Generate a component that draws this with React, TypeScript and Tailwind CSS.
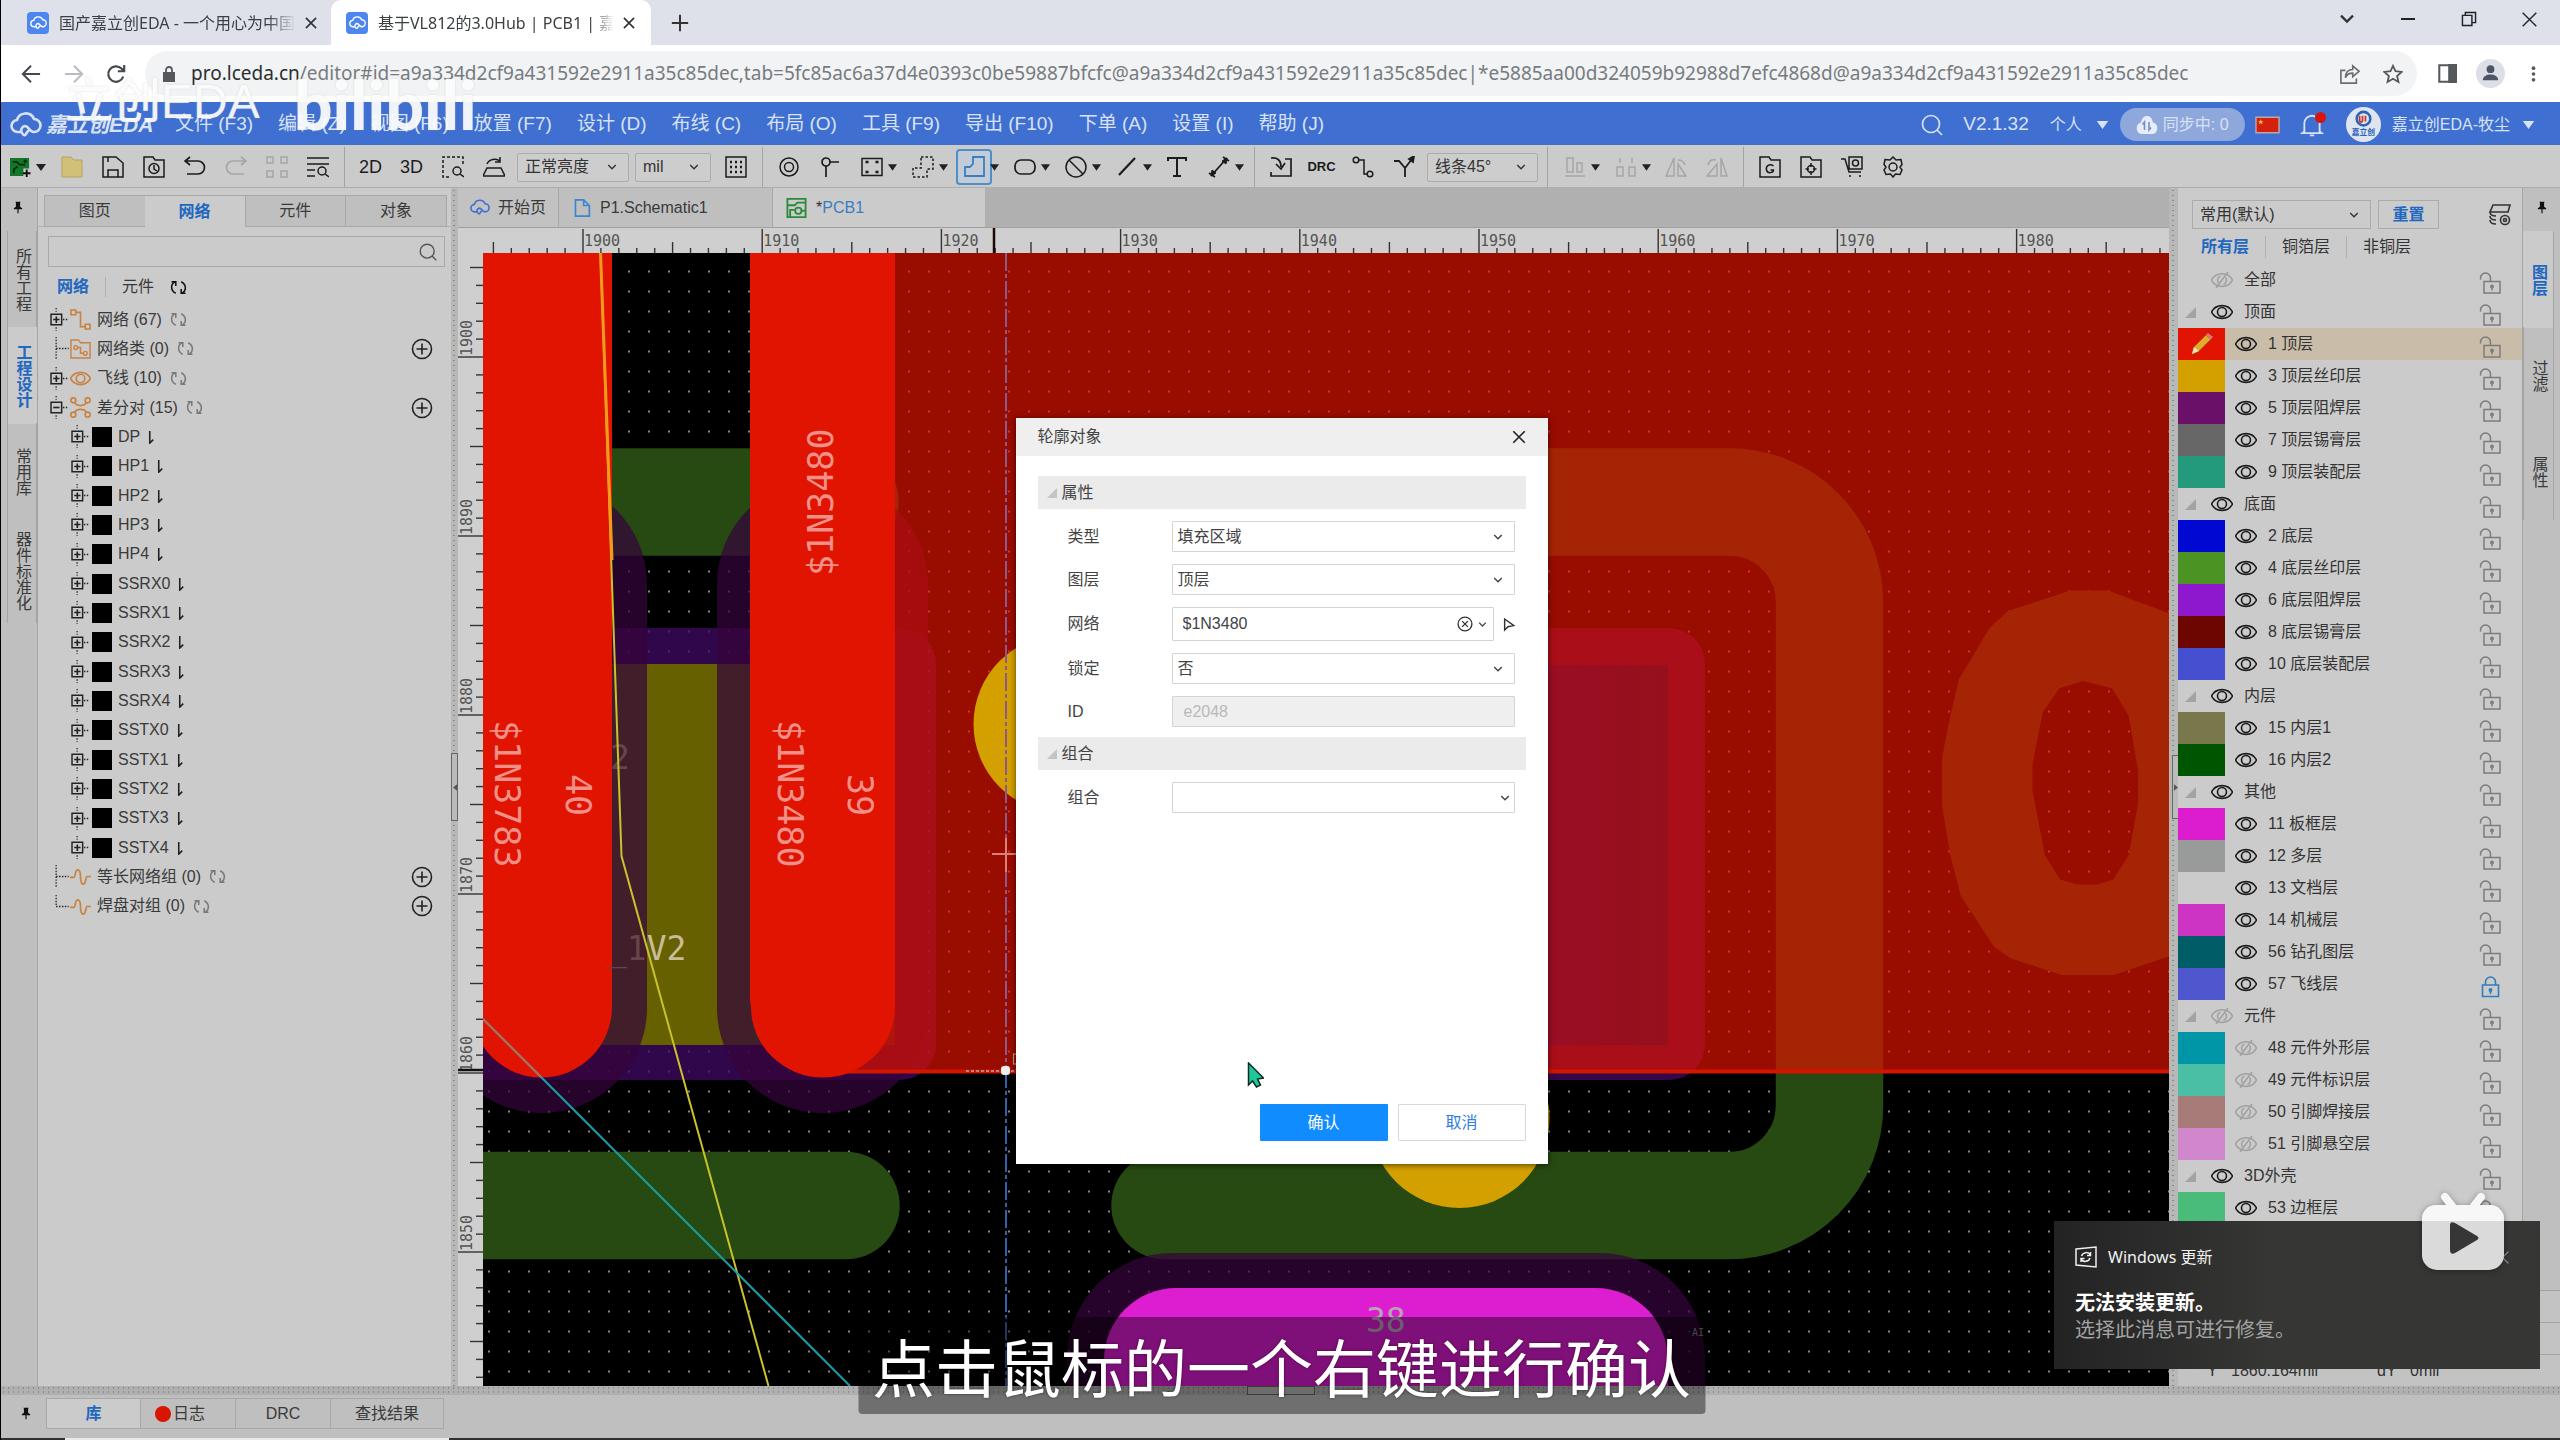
import type { ReactNode } from 'react';

/* ---------- icons ---------- */

type IcProps = { children: ReactNode; className?: string; w?: number };

function Ic({ children, className = 'w-[22px] h-[22px] text-[#1c1c1c]', w = 1.5 }: IcProps) {
  return (
    <svg viewBox="0 0 22 22" className={'shrink-0 ' + className} fill="none" stroke="currentColor" strokeWidth={w} aria-hidden="true">
      {children}
    </svg>
  );
}

function Cloud({ className }: { className: string }) {
  return (
    <svg viewBox="0 0 32 26" className={'shrink-0 ' + className} fill="none" stroke="currentColor" strokeWidth="2.6" strokeLinecap="round" aria-hidden="true">
      <path d="M10 20H8a6 6 0 0 1-1-12 9 9 0 0 1 17-1 6.500 6.500 0 0 1 0 13c-5 0-5-6-9-6a4.500 4.500 0 0 0-3 7c1 2 3 3 4 1l2-3" />
    </svg>
  );
}

function Chevron({ className = 'w-3 h-3 text-[#333]' }: { className?: string }) {
  return (
    <svg viewBox="0 0 12 12" className={'shrink-0 ' + className} fill="none" stroke="currentColor" strokeWidth="1.7" aria-hidden="true">
      <path d="M1.500 3.500 6 8l4.500-4.500" />
    </svg>
  );
}

function Caret({ className = 'w-[10px] h-[7px] text-[#222]' }: { className?: string }) {
  return (
    <svg viewBox="0 0 10 7" className={'shrink-0 ' + className} fill="currentColor" aria-hidden="true">
      <path d="M0 0h10L5 7z" />
    </svg>
  );
}

function Pin() {
  return (
    <svg viewBox="0 0 12 14" className="w-[10px] h-[13px] shrink-0" fill="#111" aria-hidden="true">
      <path d="M3 0h6v1H8.500v5L11 8v1H6.700v5H5.300V9H1V8l2.500-2V1H3z" />
    </svg>
  );
}

function Eye() {
  return (
    <Ic className="w-[22px] h-[22px] text-[#1a1a1a]" w={1.6}>
      <path d="M.5 11C5 2.500 17 2.500 21.500 11 17 19.500 5 19.500 .5 11z" />
      <circle cx="11" cy="11" r="4.500" />
    </Ic>
  );
}

function EyeOff() {
  return (
    <Ic className="w-[22px] h-[22px] text-[#a0a0a0]" w={1.5}>
      <path d="M.5 11C5 2.500 17 2.500 21.500 11 17 19.500 5 19.500 .5 11z" />
      <path d="M7.500 14a4.500 4.500 0 0 1 2-7M14.500 8.500a4.500 4.500 0 0 1-2 7M17 3 5 19" />
    </Ic>
  );
}

function LockOpen() {
  return (
    <svg viewBox="0 0 22 22" className="w-[22px] h-[22px] text-[#7c7c7c]" fill="none" stroke="currentColor" strokeWidth="1.5" aria-hidden="true">
      <path d="M5 9.500h16v11.500H5zM1.500 7.500V6a5 5 0 0 1 10 0v3.500" />
      <path d="M13 16v2.500" />
      <circle cx="13" cy="14.500" r="1.200" fill="currentColor" />
    </svg>
  );
}

function LockClosed() {
  return (
    <svg viewBox="0 0 22 22" className="w-[22px] h-[22px] text-[#2f7dbd]" fill="none" stroke="currentColor" strokeWidth="1.600" aria-hidden="true">
      <path d="M3.500 9h16v11.500h-16zM6.500 9V6a5 5 0 0 1 10 0v3" />
      <path d="M11.500 15v3" />
      <circle cx="11.500" cy="14" r="1.200" fill="currentColor" />
    </svg>
  );
}

function Refresh({ className = 'w-[17px] h-[17px] text-[#7a7a7a]' }: { className?: string }) {
  return (
    <Ic className={className} w={2}>
      <path d="M7.500 18.500C.5 15 .5 7 6.500 3.500M2 3.500h5.500v5.500M14.500 3.500c7 3.500 7 11.500 1 15M20 18.500h-5.500V13" />
    </Ic>
  );
}

function PlusCircle() {
  return (
    <Ic className="w-[22px] h-[22px] text-[#222]" w={1.6}>
      <circle cx="11" cy="11" r="9.500" />
      <path d="M11 5.500v11M5.500 11h11" />
    </Ic>
  );
}

function Glass({ className }: { className: string }) {
  return (
    <Ic className={className} w={1.7}>
      <circle cx="10" cy="10" r="8.500" />
      <path d="m16 16 5 5" />
    </Ic>
  );
}

/* ---------- toolbar ---------- */

function Tool({ label, children }: { label: string; children: ReactNode }) {
  return (
    <button type="button" aria-label={label} className="w-[41px] h-9 flex items-center justify-center shrink-0">
      {children}
    </button>
  );
}

function ToolMenu({ label, children, active }: { label: string; children: ReactNode; active?: boolean }) {
  return (
    <button type="button" aria-label={label} className="w-[51px] h-9 flex items-center pl-1 shrink-0">
      <span className={active ? 'w-9 h-9 flex items-center justify-center border-2 border-[#4c8fc9] rounded-[4px] bg-[#c3ccd6]' : 'w-9 h-9 flex items-center justify-center'}>
        {children}
      </span>
      <Caret className="w-[9px] h-[7px] text-[#222] -ml-[2px]" />
    </button>
  );
}

function Bar() {
  return <span className="w-3 h-full flex justify-center shrink-0"><i className="w-px h-full bg-[#a2a2a2]" /></span>;
}

function ToolSelect({ label, value, className }: { label: string; value: string; className: string }) {
  return (
    <span className={'relative flex items-center h-[29px] shrink-0 ' + className}>
      <select aria-label={label} defaultValue={value} className="appearance-none w-full h-full border border-[#ababab] rounded-[2px] bg-[#cdcdcd] pl-[7px] text-[16px] text-[#333]">
        <option>{value}</option>
      </select>
      <Chevron className="absolute right-3 w-[10px] h-[10px] text-[#333] pointer-events-none" />
    </span>
  );
}

const GREY = 'w-[22px] h-[22px] text-[#a6a6a6]';

function Toolbar() {
  return (
    <div className="h-[43px] pt-[2px] shrink-0 bg-[#cbcbcb] border-b border-[#adadad] flex items-center overflow-hidden">
      <button type="button" aria-label="新建" className="w-[50px] flex items-center pl-[9px] gap-[5px] shrink-0">
        <svg viewBox="0 0 22 22" className="w-[21px] h-[21px]" aria-hidden="true">
          <path d="M0 1h20v11h-6v8H0z" fill="#14762a" />
          <path d="M3 5h4l3 3h6M4 17v-4l4-3" stroke="#062e0c" strokeWidth="1.800" fill="none" />
          <circle cx="16" cy="4.500" r="1.800" fill="#062e0c" />
          <path d="M17.500 13v8M13.500 17h8" stroke="#111" strokeWidth="2" />
        </svg>
        <Caret />
      </button>
      <Tool label="打开"><Ic className="w-[22px] h-[22px] text-[#b5a35c]" w={1}><path d="M1 1h9l3 3h8v17H1z" fill="#cfc178" /></Ic></Tool>
      <Tool label="保存"><Ic><path d="M1 1h13l7 6v14H1zM6 21v-7h10v7M6 1v5" /></Ic></Tool>
      <Tool label="历史"><Ic><path d="M1 1h9l2 3h9v17H1z" /><circle cx="11" cy="12.500" r="5" /><path d="M11 9v4l3 2" /></Ic></Tool>
      <Tool label="撤销"><Ic w={1.7}><path d="M6 1 1 5l5 4M1 5h13a6 6 0 0 1 0 13H3" /></Ic></Tool>
      <Tool label="重做"><Ic className={GREY} w={1.7}><path d="m16 1 5 4-5 4M21 5H8a6 6 0 0 0 0 13h11" /></Ic></Tool>
      <Tool label="网格"><Ic className={GREY}><path d="M1 1h6v6H1zM15 1h6v6h-6zM1 15h6v6H1zM15 15h6v6h-6z" /></Ic></Tool>
      <Tool label="查找"><Ic><path d="M0 2h22M0 8h22M0 14h8M0 20h8" /><circle cx="15" cy="15" r="4" /><path d="m18 18 4 3" /></Ic></Tool>
      <Bar />
      <Tool label="2D"><span className="text-[18px] text-[#1c1c1c]">2D</span></Tool>
      <Tool label="3D"><span className="text-[18px] text-[#1c1c1c]">3D</span></Tool>
      <Tool label="框选缩放"><Ic><path d="M7 21H1V1h20v8" strokeDasharray="3 2" /><circle cx="15" cy="15" r="4" /><path d="m18 18 4 3" /></Ic></Tool>
      <Tool label="翻转"><Ic><path d="M4 12h14l4 8H0zM4 8c2-5 9-6 13-3M17 1v5h-5" /></Ic></Tool>
      <ToolSelect label="亮度" value="正常亮度" className="w-[112px] ml-[3px]" />
      <ToolSelect label="单位" value="mil" className="w-[76px] ml-[6px]" />
      <span className="w-1" />
      <Tool label="栅格"><Ic><path d="M1 1h20v20H1z" /><path d="M5 6h13M5 11h13M5 16h13" strokeDasharray="2 3" strokeWidth="2.400" /></Ic></Tool>
      <Bar />
      <Tool label="过孔"><Ic><circle cx="11" cy="11" r="9" /><circle cx="11" cy="11" r="4.500" /></Ic></Tool>
      <Tool label="测试点"><Ic w={1.7}><circle cx="7" cy="6" r="4" /><path d="M11 6h9M7 10v11" /></Ic></Tool>
      <ToolMenu label="焊盘"><Ic><path d="M1 2.500h20v17H1z" /><path d="M4.500 6h3M14.500 6h3M4.500 16h3M14.500 16h3" strokeWidth="2.500" /></Ic></ToolMenu>
      <ToolMenu label="区域"><Ic><path d="M9 1h12v12h-6v8H1v-9h8z" strokeDasharray="2.500 2" /></Ic></ToolMenu>
      <ToolMenu label="填充" active><Ic className="w-[22px] h-[22px] text-[#3a7fc0]" w={1.8}><path d="M10 1h11v19H2V11h5l3-3z" /></Ic></ToolMenu>
      <ToolMenu label="挖槽"><Ic w={1.7}><rect x="1" y="4" width="20" height="14" rx="6" /></Ic></ToolMenu>
      <ToolMenu label="禁止"><Ic><circle cx="11" cy="11" r="10" /><path d="m4 4 14 14" /></Ic></ToolMenu>
      <ToolMenu label="线"><Ic w={2.2}><path d="M3 19 19 2" /></Ic></ToolMenu>
      <Tool label="文本"><Ic w={2}><path d="M2 5V2h18v3M11 2v18M7 20h8" /></Ic></Tool>
      <ToolMenu label="测量"><Ic w={1.8}><path d="M3 20 19 2M1 17l6 4M15 1l6 4" /><path d="m3 20 1-6 4 3zM19 2l-1 6-4-3z" fill="currentColor" strokeWidth="1" /></Ic></ToolMenu>
      <Bar />
      <Tool label="导入"><Ic w={1.7}><path d="M15 3h6v17H1v-4M1 2c6-1 10 2 10 9M6 8l5 5 4-6" /></Ic></Tool>
      <Tool label="DRC"><span className="text-[13px] font-bold text-[#1c1c1c]">DRC</span></Tool>
      <Tool label="布线"><Ic><circle cx="4" cy="4" r="2.800" /><circle cx="18" cy="18" r="2.800" /><path d="M7 4h5v14h3" /></Ic></Tool>
      <Tool label="差分"><Ic w={1.8}><path d="M1 5h5l6 7v9M12 12l7-9" /><path d="m21 0-1 6-4-3z" fill="currentColor" /></Ic></Tool>
      <ToolSelect label="线条" value="线条45°" className="w-[111px] ml-[3px]" />
      <span className="w-[3px]" />
      <Bar />
      <ToolMenu label="对齐"><Ic className={GREY}><path d="M3 2h6v14H3zM13 7h5v9h-5zM1 20h20" /></Ic></ToolMenu>
      <ToolMenu label="分布"><Ic className={GREY}><path d="M2 11h6v9H2zM14 11h6v9h-6zM5 2v5M17 2v5" /></Ic></ToolMenu>
      <Tool label="镜像"><Ic className={GREY}><path d="M9 2v18H1zM13 8l8 12h-8zM13 4c4 0 6 2 7 5" /></Ic></Tool>
      <Tool label="旋转"><Ic className={GREY}><path d="M15 2v18h6zM11 8v12H1zM2 9c1-4 4-6 8-5" /></Ic></Tool>
      <Bar />
      <Tool label="导出Gerber"><Ic><path d="M1 1h9l2 3h9v17H1z" /><path d="M14.500 10c-4-3-8 0-7 4s7 3 7 0h-3" /></Ic></Tool>
      <Tool label="坐标"><Ic><path d="M1 1h9l2 3h9v17H1z" /><circle cx="11" cy="13" r="3.500" /><path d="M11 7v4M11 15v4M5.500 13h3.500M13 13h3.500" /></Ic></Tool>
      <Tool label="下单"><Ic><path d="M0 3h4l4 13h12M8 1h13v12H8zM8 20h2M18 20h2" /><circle cx="14.500" cy="7" r="3" /></Ic></Tool>
      <Tool label="设置"><Ic><path d="m11 1 3 3 5-.5 1 5-2 2.500 2 3-2 4.500-4.500-.5-2.500 3-2.500-3-4.500.5L2 14l2-3-2-2.500 1-5L8 4z" /><circle cx="11" cy="11" r="4" /></Ic></Tool>
    </div>
  );
}

/* ---------- browser chrome ---------- */

function Favicon() {
  return <span className="w-[22px] h-[22px] rounded-[4px] bg-[#4d86ee] text-white flex items-center justify-center shrink-0"><Cloud className="w-[17px] h-[14px]" /></span>;
}

function BrowserTabs() {
  return (
    <div className="h-[45px] shrink-0 bg-[#dee1ea] flex font-['Noto_Sans','Noto_Sans_CJK_SC',sans-serif] text-[16px] text-[#3c4043]">
      <div className="w-[330px] h-full flex items-center pl-[26px] pr-[13px]">
        <Favicon />
        <span className="ml-[10px] flex-1 overflow-hidden whitespace-nowrap [mask-image:linear-gradient(90deg,#000_88%,transparent)]">国产嘉立创EDA - 一个用心为中国</span>
        <button type="button" aria-label="关闭标签页" className="ml-2"><Ic className="w-[14px] h-[14px] text-[#333]" w={2.6}><path d="m3 3 16 16M19 3 3 19" /></Ic></button>
      </div>
      <div className="w-[320px] h-full flex items-center pl-[15px] pr-[15px] bg-white rounded-t-[10px]">
        <Favicon />
        <span className="ml-[10px] flex-1 overflow-hidden whitespace-nowrap [mask-image:linear-gradient(90deg,#000_90%,transparent)]">基于VL812的3.0Hub | PCB1 | 嘉</span>
        <button type="button" aria-label="关闭标签页" className="ml-2"><Ic className="w-[14px] h-[14px] text-[#333]" w={2.6}><path d="m3 3 16 16M19 3 3 19" /></Ic></button>
      </div>
      <button type="button" aria-label="新标签页" className="w-[58px] h-full flex items-center justify-center"><Ic className="w-[18px] h-[18px] text-[#333]" w={2.4}><path d="M11 1v20M1 11h20" /></Ic></button>
      <span className="flex-1" />
      <div className="flex h-[38px]">
        <button type="button" aria-label="搜索标签页" className="w-[61px] flex items-center justify-center"><Chevron className="w-4 h-4 text-[#333]" /></button>
        <button type="button" aria-label="最小化" className="w-[61px] flex items-center justify-center"><i className="w-[14px] h-[2px] bg-[#222]" /></button>
        <button type="button" aria-label="还原" className="w-[61px] flex items-center justify-center"><Ic className="w-[16px] h-[16px] text-[#222]" w={2}><path d="M2 6h13v14H2zM6 6V2h14v14h-5" /></Ic></button>
        <button type="button" aria-label="关闭" className="w-[61px] flex items-center justify-center"><Ic className="w-[15px] h-[15px] text-[#222]" w={2}><path d="m1 1 20 20M21 1 1 21" /></Ic></button>
      </div>
    </div>
  );
}

const URL_REST =
  '/editor#id=a9a334d2cf9a431592e2911a35c85dec,tab=5fc85ac6a37d4e0393c0be59887bfcfc@a9a334d2cf9a431592e2911a35c85dec|*e5885aa00d324059b92988d7efc4868d@a9a334d2cf9a431592e2911a35c85dec';

function AddressBar() {
  return (
    <div className="h-[57px] shrink-0 bg-white flex items-center">
      <button type="button" aria-label="后退" className="w-[43px] ml-2 flex justify-center"><Ic className="w-[20px] h-[20px] text-[#46494d]" w={2.2}><path d="M21 11H2M11 2l-9 9 9 9" /></Ic></button>
      <button type="button" aria-label="前进" className="w-[43px] flex justify-center"><Ic className="w-[20px] h-[20px] text-[#b9bcc0]" w={2.2}><path d="M1 11h19M11 2l9 9-9 9" /></Ic></button>
      <button type="button" aria-label="刷新" className="w-[41px] flex justify-center"><Ic className="w-[20px] h-[20px] text-[#46494d]" w={2.4}><path d="M19 14a8.500 8.500 0 1 1-2-9l3 3M20 1v7h-7" /></Ic></button>
      <div className="flex-1 min-w-0 h-[45px] ml-[9px] mr-[9px] rounded-full bg-[#f1f3f4] flex items-center pl-[18px] pr-[3px]">
        <svg viewBox="0 0 12 16" className="w-[12px] h-[16px] shrink-0" aria-hidden="true"><path d="M0 6h12v10H0z" fill="#55585c" /><path d="M3 7V4a3 3 0 0 1 6 0v3" fill="none" stroke="#55585c" strokeWidth="1.800" /></svg>
        <a href="#editor" className="ml-[16px] flex-1 min-w-0 overflow-hidden whitespace-nowrap font-['Noto_Sans',sans-serif] text-[19px] text-[#777b80]">
          <span className="text-[#2b2e31]">pro.lceda.cn</span>{URL_REST}
        </a>
        <button type="button" aria-label="分享" className="w-[43px] flex justify-center"><Ic className="w-[20px] h-[20px] text-[#6a6d71]" w={1.8}><path d="M6 7H1v14h17v-5M14 2l7 6-7 6v-4c-5 0-7 2-8 5 0-6 3-9 8-9z" /></Ic></button>
        <button type="button" aria-label="收藏" className="w-[43px] flex justify-center"><Ic className="w-[20px] h-[20px] text-[#55585c]" w={2}><path d="m11 2 2.800 6 6.700.7-5 4.500 1.500 6.600-6-3.500-6 3.500 1.500-6.600-5-4.500L8.200 8z" /></Ic></button>
      </div>
      <button type="button" aria-label="侧边栏" className="w-[43px] flex justify-center"><Ic className="w-[19px] h-[19px] text-[#55585c]" w={2.4}><path d="M1.500 1.500h19v19h-19z" /><path d="M13 1h8v20h-8z" fill="currentColor" /></Ic></button>
      <button type="button" aria-label="用户" className="w-[43px] flex justify-center"><svg viewBox="0 0 30 30" className="w-[29px] h-[29px]" aria-hidden="true"><circle cx="15" cy="15" r="15" fill="#dcdfe5" /><circle cx="15" cy="10.500" r="4" fill="#4d5566" /><path d="M7 22c0-8 16-8 16 0z" fill="#4d5566" /></svg></button>
      <button type="button" aria-label="菜单" className="w-[43px] mr-[5px] flex justify-center"><svg viewBox="0 0 6 20" className="w-[5px] h-[18px]" fill="#55585c" aria-hidden="true"><circle cx="3" cy="3" r="2.200" /><circle cx="3" cy="10" r="2.200" /><circle cx="3" cy="17" r="2.200" /></svg></button>
    </div>
  );
}

/* ---------- application menu ---------- */

const MENUS = ['文件 (F3)', '编辑 (Z)', '视图 (F6)', '放置 (F7)', '设计 (D)', '布线 (C)', '布局 (O)', '工具 (F9)', '导出 (F10)', '下单 (A)', '设置 (I)', '帮助 (J)'];

function MenuBar() {
  return (
    <div className="h-[43px] pt-[2px] shrink-0 bg-[#3f6fd1] flex items-center text-[#d9e2f5] text-[19px] whitespace-nowrap">
      <Cloud className="w-[32px] h-[26px] ml-[9px]" />
      <b className="italic text-[21px] ml-1 w-[129px]">嘉立创EDA</b>
      <nav className="flex gap-[25px]">
        {MENUS.map((m) => <button type="button" key={m}>{m}</button>)}
      </nav>
      <span className="flex-1" />
      <button type="button" aria-label="搜索"><Glass className="w-[22px] h-[22px] text-[#d9e2f5]" /></button>
      <span className="ml-[20px] text-[19px]">V2.1.32</span>
      <button type="button" className="ml-[21px] mr-[11px] flex items-center gap-[14px] text-[16px]">个人<Caret className="w-[13px] h-[8px] text-[#d9e2f5]" /></button>
      <button type="button" className="h-[33px] w-[125px] rounded-full bg-[#8ea8dc] flex items-center pl-[15px] gap-[4px] text-[16px]">
        <svg viewBox="0 0 24 20" className="w-[24px] h-[20px]" aria-hidden="true"><path d="M6 19a6 6 0 0 1 0-11.500C7 2 10 1 12 1s5 1 6 6.500A6 6 0 0 1 18 19z" fill="#e6ecf8" /><path d="M9.500 15V7L7.500 9.500M14 7v8l2-2.500" stroke="#6f8fd0" strokeWidth="1.600" fill="none" /></svg>
        同步中: 0
      </button>
      <svg viewBox="0 0 26 18" className="w-[25px] h-[18px] ml-[10px]" aria-label="语言"><path d="M1 1h24v16H1z" fill="#d4200c" stroke="#b9a7b0" strokeWidth="1.500" /><path d="m6 3 .8 2H9L7.200 6.300l.7 2L6 7.200l-1.900 1.100.7-2L3 5h2.200z" fill="#f0c53a" /></svg>
      <button type="button" aria-label="通知" className="relative ml-[20px]">
        <Ic className="w-[24px] h-[24px] text-[#d9e2f5]" w={1.7}><path d="M4 17V9.500a7 7 0 0 1 14 0V17l2 1.500H2zM9 20.500h4" /></Ic>
        <i className="absolute -right-[2px] -top-[1px] w-[11px] h-[11px] rounded-full bg-[#d8150c]" />
      </button>
      <svg viewBox="0 0 36 36" className="w-[35px] h-[35px] ml-[22px]" aria-hidden="true">
        <circle cx="18" cy="18" r="18" fill="#dfe5ee" />
        <circle cx="18" cy="12" r="7" fill="none" stroke="#2b63b8" strokeWidth="2.600" />
        <path d="M14 9v5c0 2 3 2 3 0V9M20 9v6" stroke="#c5362c" strokeWidth="1.800" fill="none" />
        <text x="18" y="29" textAnchor="middle" fontSize="8" fontWeight="700" fill="#2b63b8">嘉立创</text>
      </svg>
      <button type="button" className="ml-[11px] mr-[25px] flex items-center gap-[12px] text-[16px]">嘉立创EDA-牧尘<Caret className="w-[13px] h-[8px] text-[#d9e2f5]" /></button>
    </div>
  );
}

/* ---------- left side ---------- */

const VTAB = 'border-y border-l border-[#a4a4a4] -mt-px flex items-center justify-center [writing-mode:vertical-rl] leading-4 ';

function LeftStrip() {
  return (
    <div className="w-[37px] shrink-0 bg-[#bfbfbf] flex flex-col pl-[6px] border-r border-[#a4a4a4]">
      <button type="button" aria-label="固定" className="h-[44px] flex items-center pl-[6px] -mt-[3px]"><Pin /></button>
      <button type="button" className={VTAB + 'h-[97px] mt-[2px]'}>所有工程</button>
      <button type="button" className={VTAB + 'h-[97px] bg-[#cbcbcb] text-[#2268c0] font-bold -mr-px'}>工程设计</button>
      <button type="button" className={VTAB + 'h-[97px]'}>常用库</button>
      <button type="button" className={VTAB + 'h-[104px]'}>器件标准化</button>
    </div>
  );
}

function Expander({ open, leaf, last }: { open?: boolean; leaf?: boolean; last?: boolean }) {
  return (
    <svg viewBox="0 0 20 30" className="w-5 h-[29px] shrink-0" fill="none" stroke="#222" strokeWidth="1.300" aria-hidden="true">
      {leaf ? (
        <path d={last ? 'M6 3v12h13' : 'M6 3v23M6 15h13'} strokeDasharray="1.500 1.500" />
      ) : (
        <>
          <path d="M6 3v4M6 23v4M13 15h6" strokeDasharray="1.500 1.500" />
          <path d="M.7 9.500h11v11H.7z" strokeWidth="1.500" />
          <path d={open ? 'M3 15h6.500' : 'M3 15h6.500M6.200 12v6.500'} strokeWidth="1.700" />
        </>
      )}
    </svg>
  );
}

const OR = 'w-[21px] h-[21px] text-[#c98242]';
const TREE_TOP: { name: string; icon: ReactNode; leaf?: boolean; open?: boolean; add?: boolean }[] = [
  { name: '网络 (67)', icon: <Ic className={OR} w={1.7}><path d="M1 1h5v5H1zM16 16h5v5h-5zM6 3.500h5v15h5" /></Ic> },
  { name: '网络类 (0)', leaf: true, add: true, icon: <Ic className={OR} w={1.5}><path d="M1 2h8l2 3h10v16H1z" /><circle cx="6" cy="10" r="2" /><circle cx="16" cy="16" r="2" /><path d="M8 10h3v6h3" /></Ic> },
  { name: '飞线 (10)', icon: <Ic className={OR} w={1.7}><path d="M.5 11C5 2.500 17 2.500 21.500 11 17 19.500 5 19.500 .5 11z" /><circle cx="11" cy="11" r="4.500" /></Ic> },
  { name: '差分对 (15)', open: true, add: true, icon: <Ic className={OR} w={1.7}><circle cx="3.500" cy="3.500" r="2.600" /><circle cx="18.500" cy="3.500" r="2.600" /><circle cx="3.500" cy="18.500" r="2.600" /><circle cx="18.500" cy="18.500" r="2.600" /><path d="M5 6c2 4 10 4 12 0M5 16c2-4 10-4 12 0" /></Ic> },
];
const PAIRS = ['DP', 'HP1', 'HP2', 'HP3', 'HP4', 'SSRX0', 'SSRX1', 'SSRX2', 'SSRX3', 'SSRX4', 'SSTX0', 'SSTX1', 'SSTX2', 'SSTX3', 'SSTX4'];
const Wave = <Ic className={OR} w={1.8}><path d="M0 12h4c2 0 1-8 4-8s3 4 3 7 0 8 3 8 2-8 4-8h4" /></Ic>;
const TREE_END = [{ name: '等长网络组 (0)', last: false }, { name: '焊盘对组 (0)', last: true }];

function LeftPanel() {
  return (
    <div className="w-[413px] shrink-0 bg-[#cbcbcb] flex flex-col text-[16px] text-[#3a3a3a]">
      <div className="mt-[7px] pl-[6px] pr-[5px] flex h-[32px] border-b border-[#b0b0b0]">
        {['图页', '网络', '元件', '对象'].map((t, i) => (
          <button type="button" key={t} className={i === 1 ? 'flex-1 h-[32px] bg-[#cbcbcb] border-t border-[#a8a8a8] text-[#2268c0] font-bold' : 'flex-1 h-[32px] bg-[#bfbfbf] border border-[#a8a8a8] -mr-px'}>{t}</button>
        ))}
      </div>
      <div className="mt-[9px] ml-[10px] mr-[6px] h-[31px] border border-[#a8a8a8] flex items-center pr-[7px]">
        <input type="text" aria-label="搜索" className="flex-1 bg-transparent outline-none px-2" />
        <Glass className="w-[18px] h-[18px] text-[#555]" />
      </div>
      <div className="h-[38px] pt-[2px] flex items-center pl-[19px]">
        <button type="button" className="text-[#2268c0] font-bold">网络</button>
        <i className="w-px h-[20px] bg-[#b0b0b0] mx-4" />
        <button type="button">元件</button>
        <button type="button" aria-label="刷新" className="ml-[16px]"><Refresh className="w-[17px] h-[17px] text-[#111]" /></button>
      </div>
      <ul className="h-[616px] grid auto-rows-fr pl-[12px] pr-[18px]">
        {TREE_TOP.map((n) => (
          <li key={n.name} className="flex items-center min-h-0">
            <Expander open={n.open} leaf={n.leaf} />
            {n.icon}
            <span className="ml-[6px] mr-[8px]">{n.name}</span>
            <Refresh />
            <span className="flex-1" />
            {n.add && <button type="button" aria-label="新增"><PlusCircle /></button>}
          </li>
        ))}
        {PAIRS.map((p) => (
          <li key={p} className="flex items-center pl-[21px] min-h-0">
            <Expander />
            <i className="w-[20px] h-[20px] bg-black ml-[1px]" />
            <span className="ml-[6px]">{p}</span>
            <svg viewBox="0 0 8 16" className="w-[7px] h-[14px] ml-[8px]" fill="none" stroke="#222" strokeWidth="1.800" aria-hidden="true"><path d="M2 1v14l4-4" /></svg>
          </li>
        ))}
        {TREE_END.map((n) => (
          <li key={n.name} className="flex items-center min-h-0">
            <Expander leaf last={n.last} />
            {Wave}
            <span className="ml-[6px] mr-[8px]">{n.name}</span>
            <Refresh />
            <span className="flex-1" />
            <button type="button" aria-label="新增"><PlusCircle /></button>
          </li>
        ))}
      </ul>
    </div>
  );
}

/* ---------- board view ---------- */

const UNIT = 17.92;
const VUNIT = 17.9;

function TopRuler() {
  const ticks = [];
  for (let i = -5; i <= 88; i++) {
    const x = 583 + i * UNIT;
    const major = i % 10 === 0;
    const y = major ? 229 : i % 5 === 0 ? 242 : 248;
    ticks.push(<path key={i} d={`M${x} ${y}V253`} stroke="#333" strokeWidth="1.400" />);
    if (major) ticks.push(<text key={'t' + i} x={x + 1} y="246" fontSize="15" fill="#555">{1900 + i}</text>);
  }
  return (
    <svg viewBox="458 228 1711 25" preserveAspectRatio="xMinYMin slice" className="w-full h-[25px] shrink-0 bg-[#cfcfcf] block font-['DejaVu_Sans_Mono',monospace]" aria-hidden="true">
      {ticks}
      <path d="M994 228v25" stroke="#1d0808" strokeWidth="2.500" />
    </svg>
  );
}

function LeftRuler() {
  const ticks = [];
  for (let i = -5; i <= 57; i++) {
    const y = 357 + i * VUNIT;
    const major = i % 10 === 0;
    const x = major ? 458 : i % 5 === 0 ? 470 : 476;
    ticks.push(<path key={i} d={`M${x} ${y}H483`} stroke="#333" strokeWidth="1.400" />);
    if (major) ticks.push(<text key={'t' + i} transform={`translate(472 ${y - 1}) rotate(-90)`} fontSize="15" fill="#555">{1900 - i}</text>);
  }
  return (
    <svg viewBox="458 253 25 1133" preserveAspectRatio="xMinYMin slice" className="w-[25px] h-full shrink-0 bg-[#cfcfcf] font-['DejaVu_Sans_Mono',monospace]" aria-hidden="true">
      {ticks}
      <path d="M458 1070h25" stroke="#111" strokeWidth="2.500" />
    </svg>
  );
}

function Board() {
  return (
    <svg viewBox="483 253 1686 1133" preserveAspectRatio="xMinYMin slice" className="flex-1 min-w-0 h-full bg-black font-['DejaVu_Sans_Mono',monospace]" aria-label="PCB 画布">
      <defs>
        <pattern id="dots" x="479" y="261" width="20" height="20" patternUnits="userSpaceOnUse">
          <rect x="9" y="9.500" width="2" height="2" fill="#858585" />
        </pattern>
        <linearGradient id="inner" x1="0" y1="0" x2="1" y2="0">
          <stop offset="0.5" stopColor="#a00c2c" />
          <stop offset="1" stopColor="#95101c" />
        </linearGradient>
      </defs>
      <rect x="483" y="253" width="1686" height="1133" fill="#000" />
      <rect x="483" y="253" width="1686" height="1133" fill="url(#dots)" />

      {/* bottom silkscreen */}
      <g fill="none" stroke="#264a12" strokeWidth="107.500" strokeLinecap="round">
        <path d="M400 502H845" />
        <path d="M400 1205.500H846" />
        <path d="M1165 502H1729A100 100 0 0 1 1829.500 602V1105A100 100 0 0 1 1729 1205.500H1165" />
      </g>
      <g transform="matrix(.4145 0 0 .6505 1540 400)">
        <path
          fill="#264a12"
          fillRule="evenodd"
          d="M1280 293H1370L1518 328H1560V855H1518L1385 884H1258L1135 858 1095 840 1015 762 990 700 970 625V550L985 500 1010 430 1085 350 1130 324zM1253 443 1310 432 1380 443 1420 485 1443 570V620L1420 700 1383 737 1345 745H1295L1255 737 1218 700 1188 600V560L1213 480z"
        />
      </g>

      {/* inner area and solder masks */}
      <rect x="400" y="628" width="536" height="452" rx="36" fill="#30074a" />
      <rect x="483" y="628" width="453" height="452" fill="url(#dots)" opacity=".3" />
      <rect x="483" y="664" width="412" height="381" fill="#676000" />
      <rect x="1150" y="628" width="555" height="452" rx="36" fill="#36084a" />
      <g fill="#35043a" fillOpacity=".72">
        <rect x="436" y="479" width="211" height="634" rx="105" />
        <rect x="717" y="479" width="211" height="634" rx="105" />
        <rect x="1067" y="1253" width="638" height="300" rx="105" />
      </g>
      <rect x="1104" y="1288" width="564" height="240" rx="72" fill="#dd1dd0" />

      {/* top copper pour */}
      <rect x="847" y="253" width="1322" height="817" fill="#e41200" fillOpacity=".67" />
      <rect x="1180" y="665" width="488" height="380" fill="url(#inner)" />
      <path d="M822 1071.500H2169" stroke="#d41500" strokeWidth="4" />
      <path d="M471 253H612V1007A70.500 70.500 0 0 1 471 1007z" fill="#e01400" />
      <path d="M750 253H895V1007A72 70.500 0 0 1 751 1007L750 1000z" fill="#e01400" />

      <circle cx="1062.500" cy="724" r="89" fill="#d4a000" />
      <circle cx="1459.500" cy="1118" r="90" fill="#d4a000" />

      {/* net names */}
      <g fontSize="35" fill="#f09088">
        <text transform="translate(833 576) rotate(-90)">$1N3480</text>
        <text transform="translate(495 720) rotate(90)">$1N3783</text>
        <text transform="translate(778 720) rotate(90)">$1N3480</text>
        <text transform="translate(566 774) rotate(90)">40</text>
        <text transform="translate(848 774) rotate(90)">39</text>
      </g>
      <g fontSize="33">
        <text x="610" y="769" fill="#66454a">2</text>
        <text x="607" y="960" fill="#66454a">_1<tspan fill="#c8bd98">V2</tspan></text>
        <text x="1366" y="1332" fontSize="33" fill="#b9a3b9">38</text>
        <text x="1692" y="1336" fontSize="10" fill="#777">AI</text>
      </g>

      {/* rat lines */}
      <path d="M600.500 253 621.500 856 768.500 1386" fill="none" stroke="#c9c22a" strokeWidth="2" />
      <path d="M600.500 253 612 560" stroke="#f09a1a" strokeWidth="3" />
      <path d="M483 1019 850 1386" stroke="#1c9ca6" strokeWidth="2" />
      <path d="M483 1019 541 1077" stroke="#b46a5c" strokeWidth="2" />

      {/* guide and vertex */}
      <path d="M1006 253V1070" stroke="#8a5a8e" strokeWidth="2" strokeDasharray="18 3 4 3" />
      <path d="M1006 1070V1386" stroke="#3560ae" strokeWidth="2" strokeDasharray="18 3 4 3" />
      <path d="M992 854h28M1006 838v34" stroke="#d98078" strokeWidth="2" />
      <path d="M966 1071h50" stroke="#aaa" strokeWidth="1.500" strokeDasharray="3 2" />
      <rect x="1013.500" y="1054" width="8" height="10" fill="none" stroke="#b89a80" strokeWidth="1.200" />
      <rect x="1001" y="1066" width="9" height="9" rx="3" fill="#eee" />
    </svg>
  );
}

function Center() {
  return (
    <div className="flex-1 min-w-0 flex flex-col">
      <div className="h-[40px] shrink-0 bg-[#b0b0b0] border-b border-[#a0a0a0] flex text-[16px] text-[#3a3a3a]">
        <button type="button" className="w-[101px] pl-[12px] flex items-center gap-[8px] bg-[#c2c2c2] border-r border-[#a8a8a8]"><Cloud className="w-[20px] h-[17px] text-[#3f6fd1]" />开始页</button>
        <button type="button" className="w-[214px] pl-[14px] flex items-center gap-[9px] bg-[#bfbfbf] border-r border-[#a8a8a8]">
          <Ic className="w-[18px] h-[20px] text-[#3b87cf]" w={2}><path d="M3 1h10l7 7v13H3zM13 1v7h7" /></Ic>P1.Schematic1
        </button>
        <button type="button" className="w-[212px] pl-[13px] flex items-center gap-[9px] bg-[#cbcbcb] text-[#3b7dc4]">
          <Ic className="w-[21px] h-[20px] text-[#2b8a3a]" w={2}><path d="M1 1h20v20H1zM1 8h8l3-3h9M4 21v-8h5" /><circle cx="13" cy="14" r="3.500" /><path d="M16 14h5" /></Ic><span><span className="text-[#333]">*</span>PCB1</span>
        </button>
      </div>
      <TopRuler />
      <div className="flex-1 min-h-0 flex overflow-hidden">
        <LeftRuler />
        <Board />
      </div>
    </div>
  );
}

/* ---------- right side ---------- */

type Layer = { t: string; c?: string; off?: boolean; sel?: boolean; lock?: boolean; all?: boolean };

const LAYERS: Layer[] = [
  { t: '全部', off: true, all: true },
  { t: '顶面' },
  { t: '1 顶层', c: 'bg-[#e01400]', sel: true },
  { t: '3 顶层丝印层', c: 'bg-[#d4a000]' },
  { t: '5 顶层阻焊层', c: 'bg-[#6b1068]' },
  { t: '7 顶层锡膏层', c: 'bg-[#676767]' },
  { t: '9 顶层装配层', c: 'bg-[#239a7c]' },
  { t: '底面' },
  { t: '2 底层', c: 'bg-[#0008d2]' },
  { t: '4 底层丝印层', c: 'bg-[#4b9423]' },
  { t: '6 底层阻焊层', c: 'bg-[#8d18ce]' },
  { t: '8 底层锡膏层', c: 'bg-[#6e0600]' },
  { t: '10 底层装配层', c: 'bg-[#464fcf]' },
  { t: '内层' },
  { t: '15 内层1', c: 'bg-[#79774c]' },
  { t: '16 内层2', c: 'bg-[#005600]' },
  { t: '其他' },
  { t: '11 板框层', c: 'bg-[#dc1ccf]' },
  { t: '12 多层', c: 'bg-[#999b9b]' },
  { t: '13 文档层', c: 'bg-[#cbcbcb]' },
  { t: '14 机械层', c: 'bg-[#cd34c4]' },
  { t: '56 钻孔图层', c: 'bg-[#005d67]' },
  { t: '57 飞线层', c: 'bg-[#4f57cf]', lock: true },
  { t: '元件', off: true },
  { t: '48 元件外形层', c: 'bg-[#0096a8]', off: true },
  { t: '49 元件标识层', c: 'bg-[#4abfa5]', off: true },
  { t: '50 引脚焊接层', c: 'bg-[#a67b78]', off: true },
  { t: '51 引脚悬空层', c: 'bg-[#d087cb]', off: true },
  { t: '3D外壳' },
  { t: '53 边框层', c: 'bg-[#4abc79]' },
];

function LayerRow({ l }: { l: Layer }) {
  return (
    <li className={l.sel ? 'h-8 flex items-center bg-[#c9bda9]' : 'h-8 flex items-center'}>
      {l.c ? (
        <button type="button" aria-label={l.t + ' 颜色'} className={'w-[47px] h-8 mr-[10px] flex items-center justify-center ' + l.c}>
          {l.sel && (
            <svg viewBox="0 0 22 22" className="w-[22px] h-[22px]" aria-hidden="true">
              <path d="m1 21 2-7L15 2l5 4L8 18z" fill="#e8a92c" stroke="#a06c10" />
              <path d="m1 21 2-7 5 4z" fill="#f3e2c0" />
              <path d="m15 2 2-2 5 4-2 2z" fill="#d9788a" />
            </svg>
          )}
        </button>
      ) : (
        <span className="w-[33px] pl-[7px]">
          {!l.all && <svg viewBox="0 0 11 11" className="w-[11px] h-[11px]" aria-hidden="true"><path d="M11 0v11H0z" fill="#a3a3a3" /></svg>}
        </span>
      )}
      <button type="button" aria-label="显示/隐藏" className="shrink-0">{l.off ? <EyeOff /> : <Eye />}</button>
      <span className="ml-[11px] flex-1">{l.t}</span>
      <button type="button" aria-label="锁定" className="mr-[21px] mt-[5px]">{l.lock ? <LockClosed /> : <LockOpen />}</button>
    </li>
  );
}

function RightPanel() {
  return (
    <div className="w-[344px] shrink-0 bg-[#cbcbcb] flex flex-col text-[16px] text-[#333] whitespace-nowrap">
      <div className="flex items-center h-[29px] mt-[12px] pl-[14px] pr-[11px]">
        <span className="relative w-[179px] h-[29px] flex items-center">
          <select aria-label="图层方案" defaultValue="常用(默认)" className="appearance-none w-full h-full border border-[#ababab] bg-transparent pl-[7px]"><option>常用(默认)</option></select>
          <Chevron className="absolute right-3 w-[10px] h-[10px] text-[#333] pointer-events-none" />
        </span>
        <button type="button" className="ml-[7px] w-[61px] h-[29px] border border-[#ababab] text-[#2268c0] font-bold">重置</button>
        <span className="flex-1" />
        <button type="button" aria-label="图层管理器"><Ic className="w-[22px] h-[22px]" w={1.6}><path d="M4 1h17l-2 7H1zM1 8c0 3 2 4 6 4M1 12c0 3 2 4 6 4M1 16c0 3 2 4 6 4" /><circle cx="16" cy="16" r="4.500" /><circle cx="16" cy="16" r="1.500" /></Ic></button>
      </div>
      <div className="flex items-center h-[35px] pl-[23px] pt-px">
        <button type="button" className="text-[#2268c0] font-bold">所有层</button>
        <i className="w-px h-[22px] bg-[#b0b0b0] mx-4" />
        <button type="button">铜箔层</button>
        <i className="w-px h-[22px] bg-[#b0b0b0] mx-4" />
        <button type="button">非铜层</button>
      </div>
      <ul className="flex-1 min-h-0 overflow-hidden">
        {LAYERS.map((l) => <LayerRow key={l.t} l={l} />)}
      </ul>
    </div>
  );
}

const RTAB = 'h-[97px] -mt-px border-y border-r border-[#a4a4a4] flex items-center justify-center [writing-mode:vertical-rl] leading-4 ';

function RightSide() {
  return (
    <div className="w-[382px] shrink-0 flex flex-col">
      <div className="flex-1 min-h-0 flex">
        <RightPanel />
        <div className="flex-1 bg-[#bfbfbf] border-l border-[#a4a4a4] pr-[6px] flex flex-col">
          <button type="button" aria-label="固定" className="h-[44px] flex items-center pl-[14px] -mt-[3px]"><Pin /></button>
          <button type="button" className={RTAB + 'mt-[2px] bg-[#cbcbcb] text-[#2268c0] font-bold -ml-px'}>图层</button>
          <button type="button" className={RTAB}>过滤</button>
          <button type="button" className={RTAB + 'border-b-0'}>属性</button>
        </div>
      </div>
      <div className="shrink-0 bg-[#c3c3c3] text-[16px] text-[#333]">
        <div className="h-8 border-t border-[#a4a4a4]" />
        <div className="h-8 border-t border-[#a4a4a4]" />
        <dl className="h-8 border-t border-[#a4a4a4] flex items-center pl-[29px]">
          <dt className="w-[24px]">Y</dt>
          <dd className="w-[146px]">1860.164mil</dd>
          <dt className="w-[33px]">dY</dt>
          <dd>0mil</dd>
        </dl>
      </div>
    </div>
  );
}

/* ---------- dialog ---------- */

const FIELD = 'w-full border border-[#d4d4d4] rounded-[1px] bg-white text-[16px] text-[#444] ';

function Row({ id, label, children }: { id: string; label: string; children: ReactNode }) {
  return (
    <div className="mt-3 flex items-center pl-[30px] pr-[11px]">
      <label htmlFor={id} className="w-[104px]">{label}</label>
      <div className="flex-1 relative flex items-center">{children}</div>
    </div>
  );
}

function Drop({ id, value, tight }: { id: string; value: string; tight?: boolean }) {
  return (
    <>
      <select id={id} defaultValue={value} className={FIELD + 'h-[31px] appearance-none pl-[5px]'}><option>{value}</option></select>
      <Chevron className={tight ? 'absolute right-[5px] w-[10px] h-[10px] text-[#444] pointer-events-none' : 'absolute right-[12px] w-[10px] h-[10px] text-[#444] pointer-events-none'} />
    </>
  );
}

function Section({ title }: { title: string }) {
  return (
    <h3 className="h-[33px] bg-[#ebebeb] flex items-center pl-[9px] gap-[5px]">
      <svg viewBox="0 0 10 10" className="w-[10px] h-[10px]" aria-hidden="true"><path d="M10 0v10H0z" fill="#c4c4c4" /></svg>
      {title}
    </h3>
  );
}

function Dialog() {
  return (
    <div role="dialog" aria-label="轮廓对象" className="absolute left-1/2 -translate-x-1/2 top-[418px] ml-px w-[532px] h-[746px] bg-white shadow-[0_1px_6px_rgba(0,0,0,0.6)] flex flex-col text-[16px] text-[#444]">
      <div className="h-[38px] shrink-0 bg-[#efefef] flex items-center justify-between pl-[22px] pr-[22px]">
        <h2>轮廓对象</h2>
        <button type="button" aria-label="关闭"><Ic className="w-[14px] h-[14px] text-[#222]" w={2.6}><path d="m2 2 18 18M20 2 2 20" /></Ic></button>
      </div>
      <form className="flex-1 pt-[20px] px-[22px] flex flex-col">
        <Section title="属性" />
        <Row id="type" label="类型"><Drop id="type" value="填充区域" /></Row>
        <Row id="layer" label="图层"><Drop id="layer" value="顶层" /></Row>
        <Row id="net" label="网络">
          <div className="flex-1 relative flex items-center">
            <input id="net" type="text" defaultValue="$1N3480" className={FIELD + 'h-[34px] pl-[10px]'} />
            <span className="absolute right-[7px] flex items-center gap-[5px]">
              <Ic className="w-[16px] h-[16px] text-[#333]" w={1.8}><circle cx="11" cy="11" r="9.500" /><path d="m7 7 8 8M15 7l-8 8" /></Ic>
              <Chevron className="w-[9px] h-[9px] text-[#444]" />
            </span>
          </div>
          <button type="button" aria-label="拾取" className="ml-[9px]"><Ic className="w-[12px] h-[15px] text-[#333]" w={2.6}><path d="M3 1v20l6-6 11-2z" /></Ic></button>
        </Row>
        <Row id="locked" label="锁定"><Drop id="locked" value="否" /></Row>
        <Row id="oid" label="ID"><input id="oid" type="text" disabled defaultValue="e2048" className="w-full h-[31px] border border-[#d4d4d4] rounded-[1px] bg-[#efefef] text-[#b9b9b9] pl-[11px]" /></Row>
        <div className="h-[10px]" />
        <Section title="组合" />
        <Row id="group" label="组合"><Drop id="group" value="" tight /></Row>
        <div className="mt-auto mb-[23px] flex justify-end gap-[10px]">
          <button type="button" className="w-[128px] h-[37px] rounded-[1px] bg-[#118cff] text-white">确认</button>
          <button type="button" className="w-[128px] h-[37px] rounded-[1px] border border-[#d8d8d8] bg-white text-[#2f7fe0]">取消</button>
        </div>
      </form>
    </div>
  );
}

/* ---------- overlays ---------- */

function Toast() {
  return (
    <div role="status" className="absolute right-5 bottom-[71px] w-[486px] h-[148px] bg-linear-to-r from-[#232323] to-[#363635] to-45% pl-[21px] pr-[31px] pt-[22px] font-['Noto_Sans','Noto_Sans_CJK_SC',sans-serif]">
      <div className="flex items-center h-[28px]">
        <Ic className="w-[22px] h-[22px] text-[#eee]" w={1.5}><path d="M1 3 21 1v20L1 19z" /><path d="M15.500 9a5 5 0 0 0-9 1M6 13a5 5 0 0 0 9-1M15.500 6v3.500H12M6 16v-3.500h3.500" /></Ic>
        <span className="ml-[11px] text-[16px] text-[#f2f2f2]">Windows 更新</span>
        <span className="flex-1" />
        <button type="button" aria-label="关闭通知"><Ic className="w-[13px] h-[13px] text-[#999]" w={2}><path d="m1 1 20 20M21 1 1 21" /></Ic></button>
      </div>
      <p className="mt-[18px] text-[20px] leading-[27px] font-bold text-white">无法安装更新。</p>
      <p className="text-[20px] leading-[27px] text-[#a3a3a3]">选择此消息可进行修复。</p>
    </div>
  );
}

function Overlays() {
  return (
    <>
      <div aria-hidden="true" className="absolute left-[64px] top-[72px] flex items-start whitespace-nowrap text-white/90 pointer-events-none">
        <span className="text-[48px] leading-[60px] font-medium [text-shadow:0_0_2px_rgba(160,160,160,0.4)]">立创EDA</span>
        <span className="ml-[34px] mt-[2px] text-[68px] leading-[60px] font-black font-['Lato',sans-serif] [text-shadow:0_0_2px_rgba(160,160,160,0.4)]">bilibili</span>
      </div>
      <svg viewBox="0 0 16 26" className="absolute left-[1246px] top-[1062px] w-[17px] h-[26px]" aria-hidden="true">
        <path d="M1 1v22l4-4 4 6 4-2-3-6 6-1z" fill="#1fc79a" stroke="#0b2b22" strokeWidth="1.500" />
      </svg>
      <Toast />
      <svg viewBox="0 0 84 80" className="absolute right-[55px] top-[1192px] w-[84px] h-[80px] drop-shadow-[0_1px_3px_rgba(0,0,0,0.35)]" aria-hidden="true">
        <path d="m24 5 7 9M60 5l-7 9" stroke="#f7f7f7" strokeWidth="8" strokeLinecap="round" />
        <path d="M15 13h54a14 14 0 0 1 14 14v36a15 15 0 0 1-15 15H16A15 15 0 0 1 1 63V27a14 14 0 0 1 14-14z" fill="#dadada" />
        <path d="M15 13h54a14 14 0 0 1 14 14v2H1v-2a14 14 0 0 1 14-14z" fill="#f7f7f7" />
        <path d="M34 31c-4-2-5 0-5 3v24c0 3 2 5 5 3l22-13c2-1 2-3 0-4z" fill="#363636" />
      </svg>
      <p className="absolute left-1/2 -translate-x-1/2 ml-px bottom-[26px] h-[97px] px-[14px] pt-[10px] flex items-center rounded-[4px] bg-black/42 text-white text-[63px] leading-[87px] whitespace-nowrap [text-shadow:0_0_3px_rgba(0,0,0,0.5)]">点击鼠标的一个右键进行确认</p>
    </>
  );
}

function BottomBar() {
  const tab = 'h-[31px] border border-[#a8a8a8] -ml-px flex items-center justify-center ';
  return (
    <div className="shrink-0 bg-[#bfbfbf] text-[16px] text-[#3a3a3a]">
      <div className="h-[9px] bg-[#b0b0b0] bg-[radial-gradient(#8c8c8c_1px,transparent_1px)] bg-[size:5px_4px] flex justify-center">
        <button type="button" aria-label="展开底部" className="w-[68px] h-full border border-[#666] bg-[#bbb]" />
      </div>
      <div className="h-[43px] pt-[3px] flex items-start">
        <button type="button" aria-label="固定" className="w-[46px] h-[31px] flex items-center justify-center pl-[4px]"><Pin /></button>
        <button type="button" className={tab + 'w-[95px] bg-[#cbcbcb] text-[#2268c0] font-bold'}>库</button>
        <button type="button" className={tab + 'w-[96px] gap-[2px] pr-4'}><i className="w-[16px] h-[16px] rounded-full bg-[#d91500]" />日志</button>
        <button type="button" className={tab + 'w-[96px]'}>DRC</button>
        <button type="button" className={tab + 'w-[114px]'}>查找结果</button>
      </div>
      <div className="h-[2px] bg-[#303030]"><div className="ml-[64px] w-[384px] h-full bg-[#e8e8e8]" /></div>
    </div>
  );
}

function Handle({ label, dir, className }: { label: string; dir: string; className: string }) {
  return (
    <button type="button" aria-label={label} className={'border border-[#666] bg-[#bbb] flex items-center justify-center ' + className}>
      <svg viewBox="0 0 5 8" className="w-[4px] h-[7px]" fill="#555" aria-hidden="true"><path d={dir} /></svg>
    </button>
  );
}

export default function App() {
  return (
    <div className="relative h-screen w-full overflow-hidden flex flex-col border-l border-black bg-[#cbcbcb] text-[16px] text-[#3a3a3a] font-['Liberation_Sans','Noto_Sans_CJK_SC',sans-serif]">
      <BrowserTabs />
      <AddressBar />
      <MenuBar />
      <Toolbar />
      <main className="flex-1 min-h-0 flex">
        <LeftStrip />
        <LeftPanel />
        <div className="w-[7px] shrink-0 bg-[#b8b8b8] bg-[radial-gradient(#8a8a8a_1px,transparent_1px)] bg-[size:7px_5px] flex items-center">
          <Handle label="收起左侧" dir="M5 0v8L0 4z" className="w-full h-[68px]" />
        </div>
        <Center />
        <div className="w-[9px] shrink-0 bg-[#b8b8b8] bg-[radial-gradient(#8a8a8a_1px,transparent_1px)] bg-[size:9px_5px] flex items-center pl-[3px]">
          <Handle label="收起右侧" dir="M0 0v8l5-4z" className="w-full h-[64px] border-r-0" />
        </div>
        <RightSide />
      </main>
      <BottomBar />
      <Dialog />
      <Overlays />
    </div>
  );
}
